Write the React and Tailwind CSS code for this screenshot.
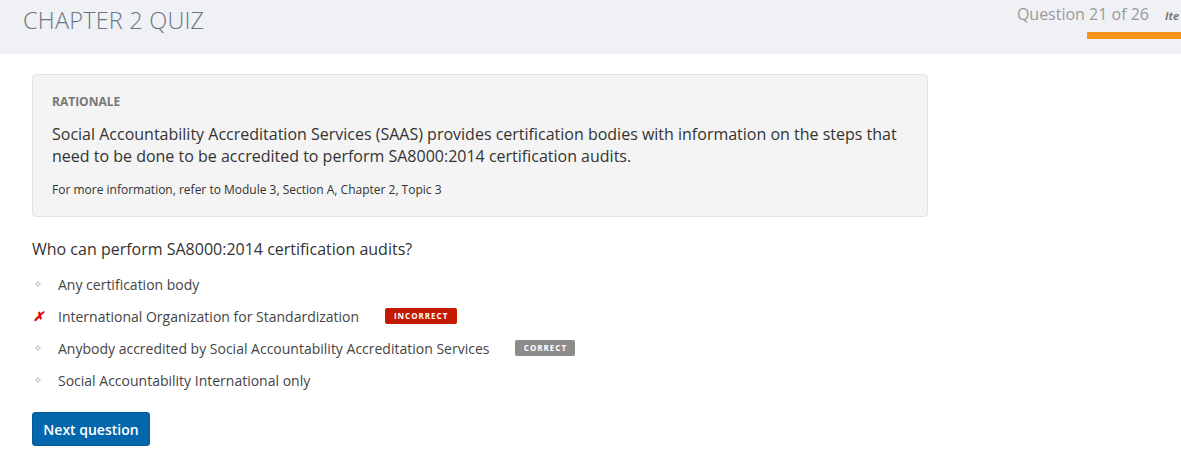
export default function App() {
  const font = { fontFamily: '"Open Sans", "Liberation Sans", sans-serif' };
  const options = [
    { text: "Any certification body" },
    { text: "International Organization for Standardization", wrong: true, badge: "INCORRECT" },
    { text: "Anybody accredited by Social Accountability Accreditation Services", badge: "CORRECT" },
    { text: "Social Accountability International only" },
  ];
  return (
    <div className="w-[1181px] h-[460px] bg-white overflow-hidden" style={font}>
      <div className="h-[54px] bg-[#f0f1f5] flex justify-between overflow-hidden">
        <div className="pl-[23px] pt-[3px] text-[23.5px] font-light text-[#6a7686] tracking-[0.2px]">CHAPTER 2 QUIZ</div>
        <div className="flex flex-col items-end">
          <div className="flex items-baseline pt-[2px] whitespace-nowrap">
            <span className="text-[16px] text-[#9a9a9a]">Question 21 of 26</span>
            <span className="ml-[16px] text-[11px] font-bold italic text-[#7a7a7a] w-[16px] overflow-hidden whitespace-nowrap">Ite</span>
          </div>
          <div className="mt-[6px] h-[7px] w-[94px] bg-[#f7941d]"></div>
        </div>
      </div>
      <div className="pl-[32px] pt-[20px]">
        <div className="w-[896px] bg-[#f4f4f4] border border-[#e3e3e3] rounded-[4px] pl-[19px] pr-[20px] pt-[18px] pb-[17px]">
          <div className="text-[12px] font-bold text-[#777777] leading-[18px]">RATIONALE</div>
          <p className="mt-[12px] text-[16px] leading-[22px] text-[#333333]">
            Social Accountability Accreditation Services (SAAS) provides certification bodies with information on the steps that need to be done to be accredited to perform SA8000:2014 certification audits.
          </p>
          <p className="mt-[14px] text-[12px] leading-[18px] text-[#333333]">
            For more information, refer to Module 3, Section A, Chapter 2, Topic 3
          </p>
        </div>
        <div className="mt-[21px] text-[16px] leading-[22px] text-[#333333]">Who can perform SA8000:2014 certification audits?</div>
        <div className="mt-[8px] flex flex-col">
          {options.map((o, i) => (
            <div key={i} className="h-[32px] flex items-center">
              <div className="w-[26px] flex justify-start">
                {o.wrong ? (
                  <span className="ml-[1px] text-[13px] font-bold italic text-[#e00000] leading-none">✗</span>
                ) : (
                  <svg width="8" height="8" viewBox="0 0 8 8" className="ml-[2px]">
                    <path d="M4 0.5 L5.2 2.8 L7.5 4 L5.2 5.2 L4 7.5 L2.8 5.2 L0.5 4 L2.8 2.8 Z" fill="#c8c8c8" />
                    <circle cx="4" cy="4" r="1" fill="#ffffff" />
                  </svg>
                )}
              </div>
              <span className="text-[14px] text-[#444444]">{o.text}</span>
              {o.badge && (
                <span
                  className={
                    "ml-[26px] h-[16px] flex items-center justify-center text-[8px] font-bold tracking-[1px] text-white rounded-[2px] " +
                    (o.wrong ? "bg-[#c41a00] w-[72px]" : "bg-[#8c8c8c] w-[60px]")
                  }
                >
                  {o.badge}
                </span>
              )}
            </div>
          ))}
        </div>
        <button className="mt-[16px] w-[118px] h-[34px] bg-[#0466ab] border border-[#035a99] rounded-[3px] text-white text-[14px] font-semibold">
          Next question
        </button>
      </div>
    </div>
  );
}
